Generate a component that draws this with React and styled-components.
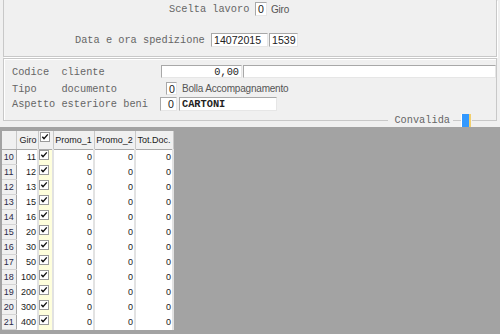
import React from 'react';
import styled, { createGlobalStyle } from 'styled-components';

const GlobalStyle = createGlobalStyle`
  html, body {
    margin: 0;
    padding: 0;
    background: #f0f0f0;
  }
  body {
    width: 500px;
    height: 334px;
    overflow: hidden;
  }
`;

const Page = styled.div`
  display: flex;
  flex-direction: column;
  width: 500px;
  height: 334px;
  background: #f0f0f0;
`;

const TopPanel = styled.div`
  display: flex;
  flex-direction: column;
  height: 57px;
  margin: 0 3px;
  padding-top: 2px;
  box-sizing: border-box;
  border: 1px solid #c8c8c8;
  border-top: none;
  box-shadow: 1px 1px 0 #fff;
`;

const FieldRow = styled.div`
  display: flex;
  align-items: center;
  height: ${(p) => p.h || 13}px;
  margin-top: ${(p) => p.top || 0}px;
  padding-left: ${(p) => p.indent || 0}px;
  gap: ${(p) => (p.gap === undefined ? 1 : p.gap)}px;
`;

const Label = styled.span`
  font-family: 'Liberation Mono', 'Courier New', monospace;
  font-size: 10.3px;
  color: #666;
  white-space: pre;
  width: ${(p) => p.w}px;
  flex: none;
`;

const Note = styled.span`
  font-family: 'Liberation Sans', Arial, sans-serif;
  font-size: 10px;
  letter-spacing: -0.2px;
  color: #555;
  margin-left: ${(p) => p.ml || 0}px;
  white-space: nowrap;
`;

const Box = styled.div`
  flex: ${(p) => (p.grow ? 1 : 'none')};
  width: ${(p) => (p.grow ? 'auto' : `${p.w}px`)};
  height: 100%;
  margin-left: ${(p) => p.ml || 0}px;
  box-sizing: border-box;
  background: #fff;
  border: 1px solid;
  border-color: #a8a8a8 #e6e6e6 #e6e6e6 #a8a8a8;
  display: flex;
  align-items: center;
  justify-content: ${(p) => (p.right ? 'flex-end' : 'flex-start')};
  padding: 0 2px;
  font-family: ${(p) =>
    p.mono
      ? "'Liberation Mono', 'Courier New', monospace"
      : "'Liberation Sans', Arial, sans-serif"};
  font-size: ${(p) => (p.mono ? '10.3px' : '10.6px')};
  font-weight: ${(p) => (p.bold ? 700 : 400)};
  color: #222;
  overflow: hidden;
  white-space: pre;
`;

const GroupBox = styled.div`
  display: flex;
  flex-direction: column;
  margin: 1px 3px 0;
  padding: 6px 0 10px 8px;
  border: 1px solid #c8c8c8;
  border-bottom: none;
  box-shadow: inset 1px 1px 0 #fff;
`;

const BottomEdge = styled.div`
  display: flex;
  align-items: center;
  height: 13px;
  margin: -7px 3px 0;
`;

const Line = styled.div`
  flex: ${(p) => (p.w ? 'none' : 1)};
  width: ${(p) => (p.w ? `${p.w}px` : 'auto')};
  height: 0;
  border-top: 1px solid #c8c8c8;
`;

const EdgeText = styled.span`
  font-family: 'Liberation Mono', 'Courier New', monospace;
  font-size: 10.3px;
  color: #666;
  padding: 0 3px 0 6px;
  line-height: 13px;
`;

const Toggle = styled.div`
  width: 10px;
  height: 13px;
  box-sizing: border-box;
  background: #3399ff;
  border-left: 1px solid #ffffff;
  border-right: 2px solid #f2cf6c;
  margin-right: 1px;
`;

const GridArea = styled.div`
  flex: 1;
  background: #a3a3a3;
  padding: 4px 0 0 2px;
  overflow: hidden;
`;

const Table = styled.table`
  border-collapse: collapse;
  table-layout: fixed;
  width: 171px;
  font-family: 'Liberation Sans', Arial, sans-serif;
  font-size: 9px;
  color: #1a1a1a;
`;

const HeadCell = styled.th`
  height: 17px;
  padding: 0 1px;
  background: #f0f0f0;
  border-right: 1px solid #c8c8c8;
  border-bottom: 1px solid #a8a8a8;
  font-weight: 400;
  text-align: ${(p) => p.align || 'center'};
  vertical-align: ${(p) => (p.top ? 'top' : 'middle')};
  padding-top: ${(p) => (p.top ? 1 : 0)}px;
  white-space: nowrap;
  overflow: hidden;
`;

const RowHead = styled.td`
  height: 14px;
  padding: 0;
  background: #f0f0f0;
  border-right: 1px solid #a8a8a8;
  border-bottom: 1px solid #d4d4d4;
  text-align: center;
  color: #2a2a48;
`;

const Cell = styled.td`
  height: 14px;
  padding: 0 1px 0 0;
  background: #fff;
  border-right: 2px solid #e2e2e2;
  border-bottom: 1px solid #fff;
  text-align: right;
  vertical-align: middle;
`;

const CheckCell = styled.td`
  height: 14px;
  padding: 0;
  background: #ffffdc;
  border-right: 2px solid #e2e2e2;
  border-bottom: 1px solid #ffffdc;
  vertical-align: top;
`;

const Check = ({ size = 10 }) => (
  <svg width={size} height={size} viewBox="0 0 10 10" style={{ display: 'block' }}>
    <rect x="0.5" y="0.5" width="9" height="9" fill="#fff" stroke="#9a9a9a" />
    <path d="M2.3 4.8 L4 6.6 L7.8 2.4" fill="none" stroke="#111" strokeWidth="1.4" />
  </svg>
);

const rows = [
  [10, 11], [11, 12], [12, 13], [13, 15], [14, 16], [15, 20],
  [16, 30], [17, 50], [18, 100], [19, 200], [20, 300], [21, 400],
];

export default function App() {
  return (
    <>
      <GlobalStyle />
      <Page>
        <TopPanel>
          <FieldRow indent={165} h={14}>
            <Label w={85}>Scelta lavoro</Label>
            <Box w={12}>0</Box>
            <Note ml={3}>Giro</Note>
          </FieldRow>
          <FieldRow indent={71} top={17} h={14}>
            <Label w={135}>Data e ora spedizione</Label>
            <Box w={57}>14072015</Box>
            <Box w={29}>1539</Box>
          </FieldRow>
        </TopPanel>

        <GroupBox>
          <FieldRow>
            <Label w={148}>Codice  cliente</Label>
            <Box w={81} mono right>0,00</Box>
            <Box grow />
          </FieldRow>
          <FieldRow top={4}>
            <Label w={148}>Tipo    documento</Label>
            <Box w={11} ml={5}>0</Box>
            <Note ml={4}>Bolla Accompagnamento</Note>
          </FieldRow>
          <FieldRow top={2} h={14} gap={2}>
            <Label w={146}>Aspetto esteriore beni</Label>
            <Box w={17} right>0</Box>
            <Box w={98} mono bold>CARTONI</Box>
          </FieldRow>
        </GroupBox>
        <BottomEdge>
          <Line />
          <EdgeText>Convalida</EdgeText>
          <Line w={8} />
          <Toggle />
          <Line w={25} />
        </BottomEdge>

        <GridArea>
          <Table>
            <colgroup>
              <col style={{ width: 14 }} />
              <col style={{ width: 22 }} />
              <col style={{ width: 15 }} />
              <col style={{ width: 41 }} />
              <col style={{ width: 41 }} />
              <col style={{ width: 38 }} />
            </colgroup>
            <thead>
              <tr>
                <HeadCell />
                <HeadCell align="right">Giro</HeadCell>
                <HeadCell align="left" top>
                  <Check />
                </HeadCell>
                <HeadCell>Promo_1</HeadCell>
                <HeadCell>Promo_2</HeadCell>
                <HeadCell>Tot.Doc.</HeadCell>
              </tr>
            </thead>
            <tbody>
              {rows.map(([n, giro]) => (
                <tr key={n}>
                  <RowHead>{n}</RowHead>
                  <Cell>{giro}</Cell>
                  <CheckCell>
                    <Check />
                  </CheckCell>
                  <Cell>0</Cell>
                  <Cell>0</Cell>
                  <Cell>0</Cell>
                </tr>
              ))}
            </tbody>
          </Table>
        </GridArea>
      </Page>
    </>
  );
}
